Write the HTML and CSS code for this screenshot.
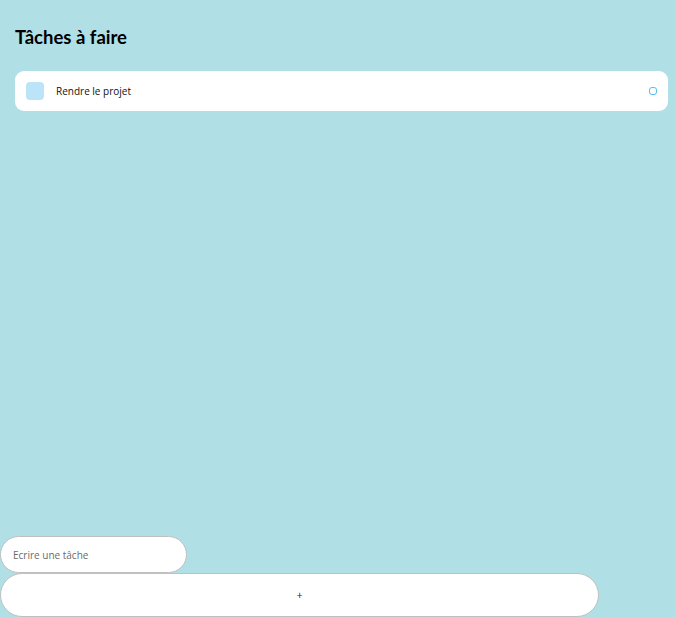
FILE: index.html
```html
<!DOCTYPE html>
<html lang="fr">
<head>
<meta charset="utf-8">
<link rel="stylesheet" href="styles.css">
</head>
<body>
<div class="app">
  <div class="tasks">
    <h1 class="title">Tâches à faire</h1>
    <div class="items">
      <div class="item">
        <div class="item-left">
          <div class="square"></div>
          <span class="item-text">Rendre le projet</span>
        </div>
        <div class="circle"></div>
      </div>
    </div>
  </div>
  <div class="footer">
    <input class="input" type="text" placeholder="Ecrire une tâche">
    <button class="add">+</button>
  </div>
</div>
</body>
</html>
```
FILE: styles.css
```css
html, body {
  margin: 0;
  padding: 0;
  height: 100%;
}
body {
  background: #b0dfe5;
  font-family: "Open Sans", "Noto Sans", sans-serif;
}
.app {
  display: flex;
  flex-direction: column;
  height: 100vh;
}
.tasks {
  flex: 1;
  padding: 25px 7px 0 15px;
}
.title {
  margin: 0;
  font-family: "Lato", "Open Sans", sans-serif;
  font-size: 18.5px;
  font-weight: 700;
  line-height: 24px;
  color: #000;
}
.items {
  margin-top: 22px;
}
.item {
  background: #fff;
  border-radius: 9px;
  height: 40px;
  padding: 0 11px;
  display: flex;
  align-items: center;
  justify-content: space-between;
  box-sizing: border-box;
}
.item-left {
  display: flex;
  align-items: center;
}
.square {
  width: 18px;
  height: 18px;
  border-radius: 4px;
  background: #bbe4f9;
  margin-right: 12px;
}
.item-text {
  font-size: 10px;
  color: #111;
}
.circle {
  width: 6px;
  height: 6px;
  border: 1.5px solid #55bcf6;
  border-radius: 3px;
}
.footer {
  display: flex;
  flex-direction: column;
  align-items: flex-start;
}
.input {
  width: 187px;
  height: 37px;
  box-sizing: border-box;
  border: 1px solid #c0c0c0;
  border-radius: 19px;
  background: #fff;
  padding: 0 12px;
  font-family: inherit;
  font-size: 10px;
  outline: none;
  margin: 0;
}
.input::placeholder {
  color: #6b6b6b;
}
.add {
  width: 599px;
  height: 44px;
  box-sizing: border-box;
  border: 1px solid #c0c0c0;
  border-radius: 22px;
  background: #fff;
  font-family: inherit;
  font-size: 10px;
  color: #10105a;
  padding: 0;
  margin: 0;
}
```
